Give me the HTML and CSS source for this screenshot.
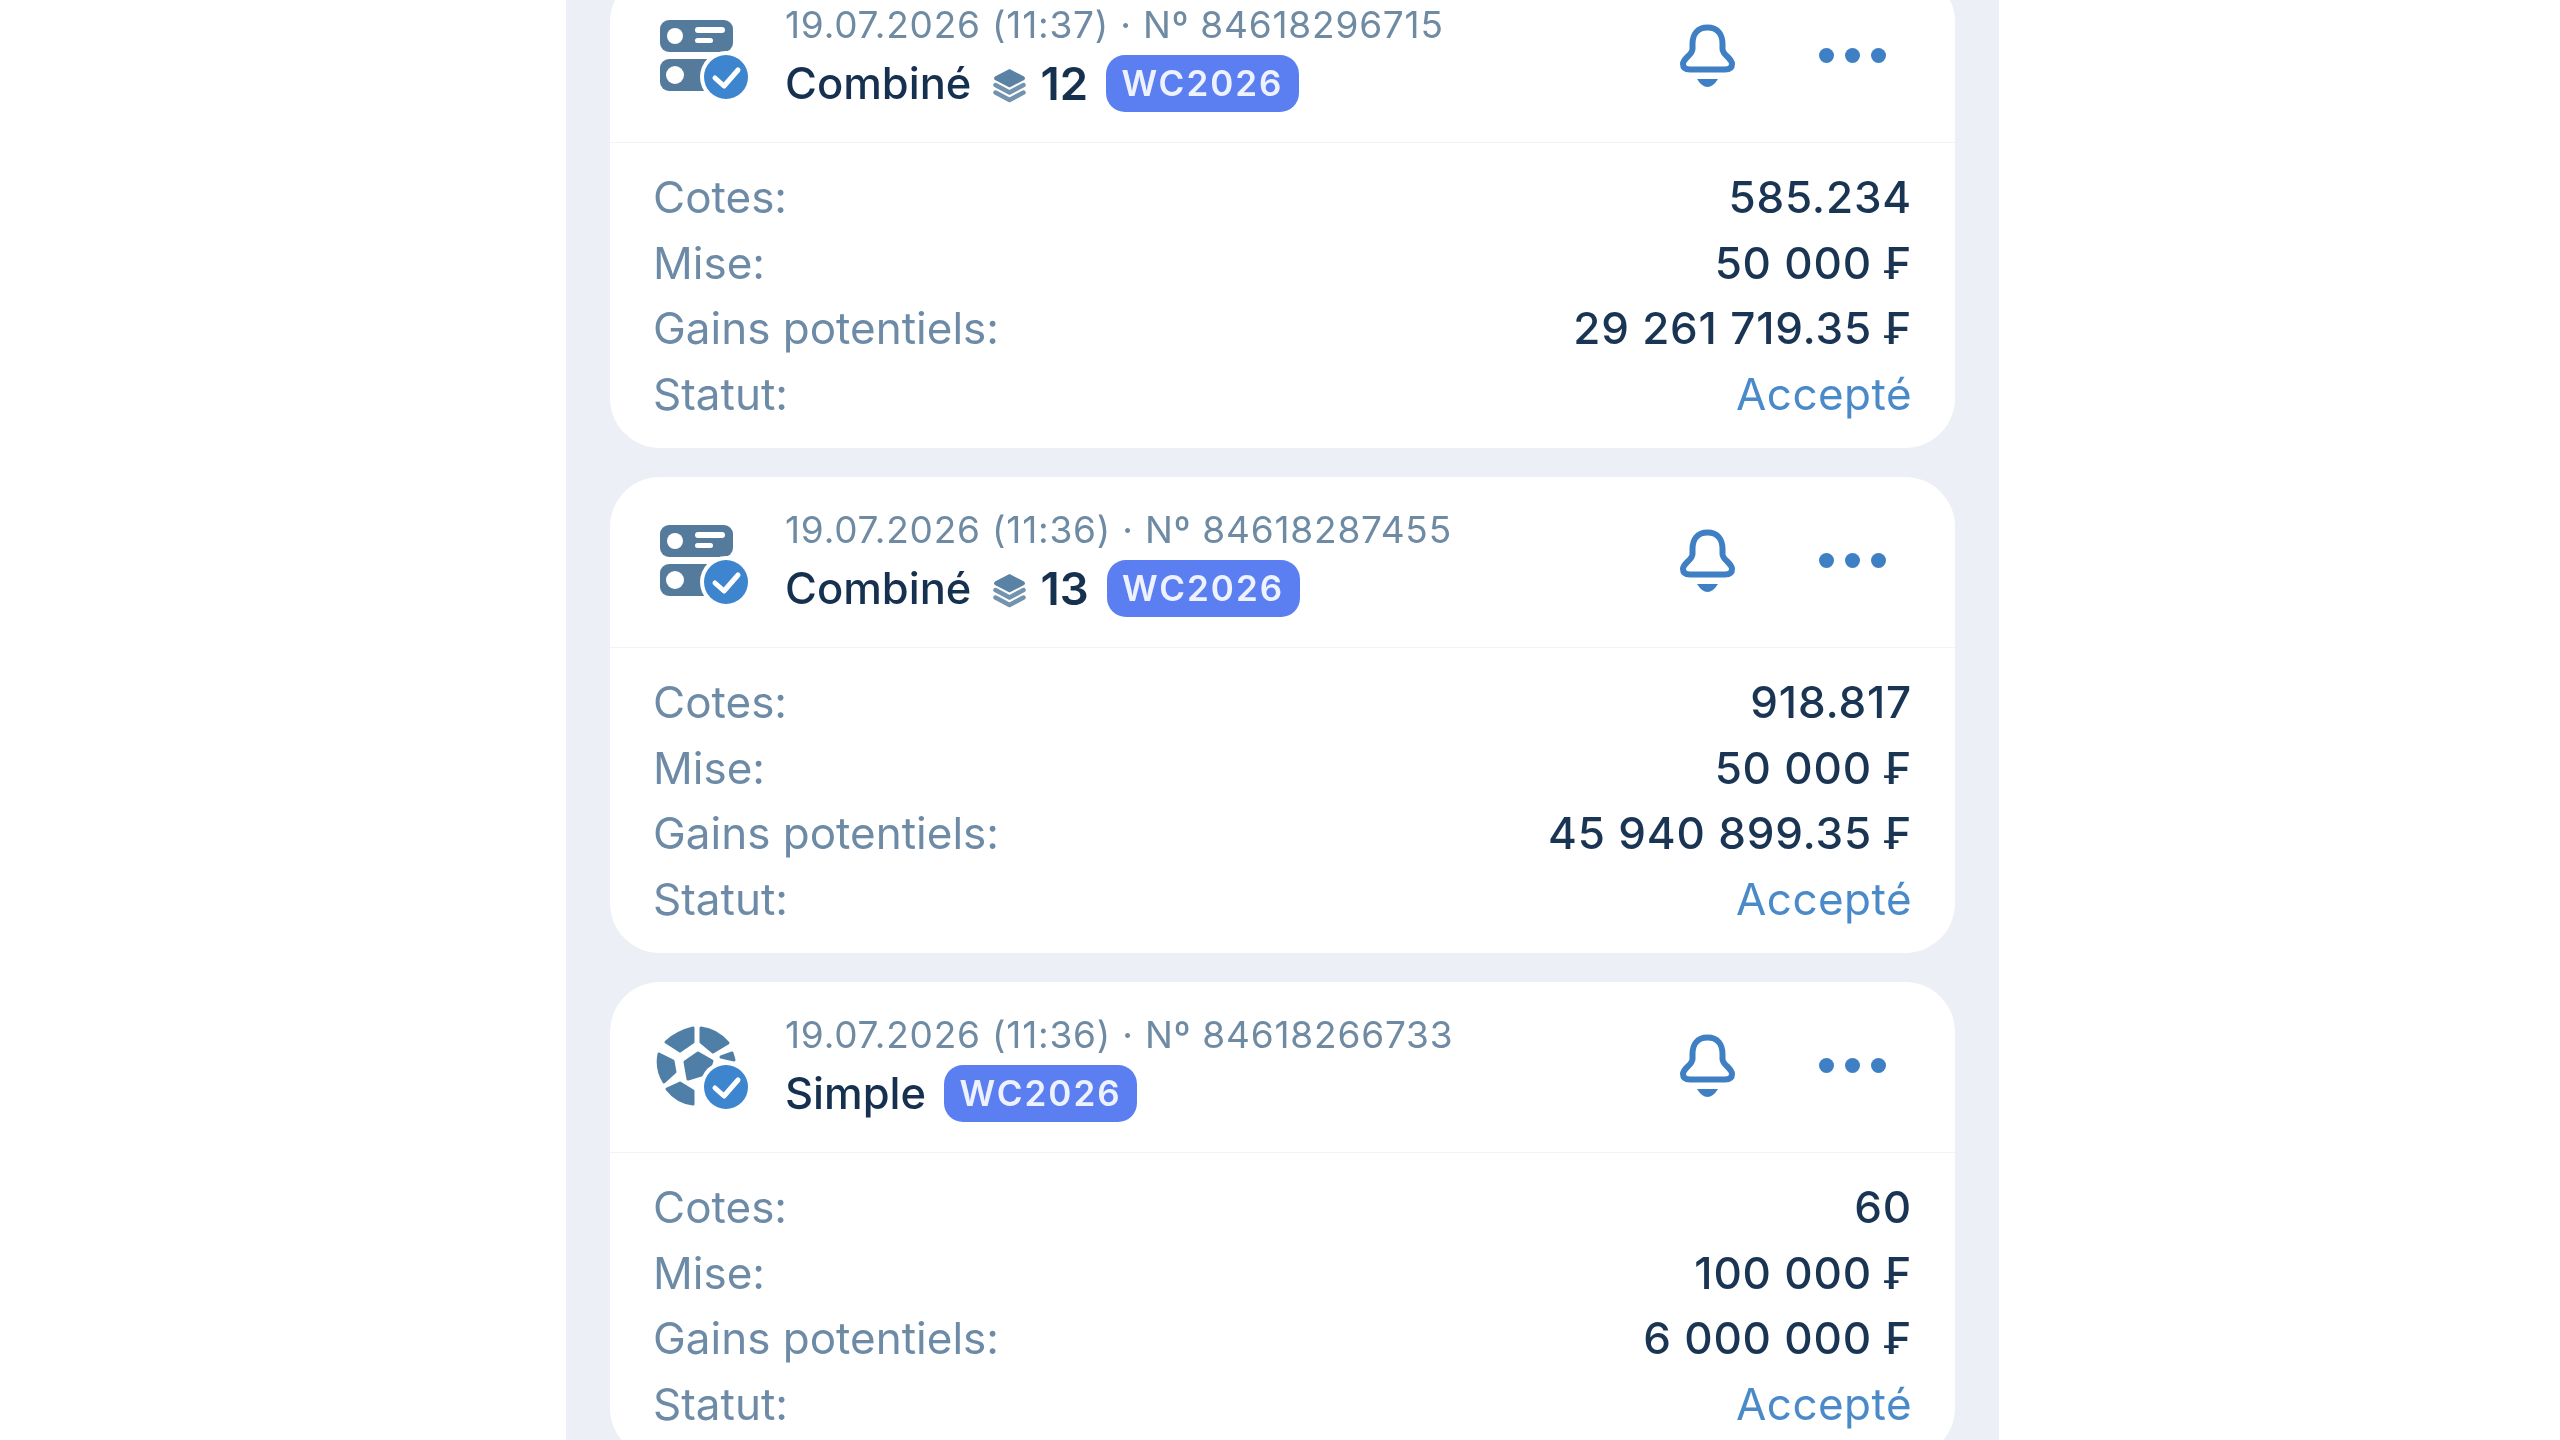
FILE: index.html
```html
<!DOCTYPE html>
<html lang="fr">
<head>
  <meta charset="UTF-8" />
  <meta name="viewport" content="width=device-width, initial-scale=1.0"/>
  <title>Historique des paris</title>
  <link rel="stylesheet" href="styles.css">
</head>
<body>

  <svg class="defs" width="0" height="0">
    <symbol id="ico-check" viewBox="0 0 100 90">
      <circle cx="71" cy="62" r="26" fill="#fff"/>
      <circle cx="71" cy="62" r="22" fill="#3d85cf"/>
      <path d="M60 63 L69 71 L83 55" fill="none" stroke="#fff" stroke-width="5" stroke-linecap="round" stroke-linejoin="round"/>
    </symbol>
    <symbol id="ico-combo" viewBox="0 0 100 90">
      <rect x="5" y="5" width="73" height="32" rx="9" fill="#557b9c"/>
      <circle cx="20" cy="21" r="8" fill="#fff"/>
      <rect x="40" y="12" width="30" height="6" rx="3" fill="#fff"/>
      <rect x="40" y="23" width="18" height="5" rx="2.5" fill="#fff"/>
      <rect x="5" y="44" width="73" height="32" rx="9" fill="#557b9c"/>
      <circle cx="20" cy="60" r="9" fill="#fff"/>
      <use href="#ico-check"/>
    </symbol>
    <symbol id="ico-ball" viewBox="0 0 100 90">
      <g fill="#4f7ea6" stroke="#4f7ea6" stroke-width="3" stroke-linejoin="round">
        <path d="M11 17 Q22 7 38 3 V17 L25 26 Z"/>
        <path d="M46 3 Q62 5 73 18 L58 27 L46 17 Z"/>
        <path d="M4 29 L18 36 L20 47 L9 57 Q1 44 4 29 Z"/>
        <path d="M30 37 L43 28 L57 36 L53 48 L33 54 Z"/>
        <path d="M66 32 L77 28 L79 35 Z"/>
        <path d="M12 64 L25 58 L38 66 V79 Q22 77 12 64 Z"/>
      </g>
      <use href="#ico-check"/>
    </symbol>
    <symbol id="ico-stack" viewBox="0 0 33 35">
      <path d="M16.500 1 L31 8.500 Q33 10.500 31 12 L16.500 19.500 L2 12 Q0 10.500 2 8.500 Z" fill="#5a82a5"/>
      <path d="M2.500 17 L16.500 24.500 L30.500 17" fill="none" stroke="#7393ae" stroke-width="4.500" stroke-linecap="round" stroke-linejoin="round"/>
      <path d="M2.500 24.500 L16.500 32 L30.500 24.500" fill="none" stroke="#7393ae" stroke-width="4.500" stroke-linecap="round" stroke-linejoin="round"/>
    </symbol>
    <symbol id="ico-bell" viewBox="0 0 60 66">
      <path d="M29.500 5.500 C19 5.500 14.500 13 14.500 22 V27 C14.500 33 5 36 5 42 C5 46 8 47.500 12 47.500 H47 C51 47.500 54 46 54 42 C54 36 44.500 33 44.500 27 V22 C44.500 13 40 5.500 29.500 5.500 Z" fill="none" stroke="#3f80c4" stroke-width="6" stroke-linejoin="round"/>
      <path d="M19 57 H40 Q35 65 29.500 65 Q24 65 19 57 Z" fill="#3f80c4"/>
    </symbol>
  </svg>

  <main class="panel">
    <div class="bet-list">

      <article class="bet-card">
        <header class="bet-head">
          <svg class="bet-icon"><use href="#ico-combo"/></svg>
          <div class="bet-info">
            <div class="bet-meta">19.07.2026 (11:37) · Nº 84618296715</div>
            <div class="bet-title">
              <span class="bet-type">Combiné</span>
              <svg class="stack-icon"><use href="#ico-stack"/></svg>
              <span class="bet-count">12</span>
              <span class="badge">WC2026</span>
            </div>
          </div>
          <div class="bet-actions">
            <svg class="bell-icon"><use href="#ico-bell"/></svg>
            <div class="dots"><span></span><span></span><span></span></div>
          </div>
        </header>
        <dl class="bet-rows">
          <div class="row"><dt>Cotes:</dt><dd>585.234</dd></div>
          <div class="row"><dt>Mise:</dt><dd>50 000 ₣</dd></div>
          <div class="row"><dt>Gains potentiels:</dt><dd>29 261 719.35 ₣</dd></div>
          <div class="row"><dt>Statut:</dt><dd class="accepted">Accepté</dd></div>
        </dl>
      </article>

      <article class="bet-card">
        <header class="bet-head">
          <svg class="bet-icon"><use href="#ico-combo"/></svg>
          <div class="bet-info">
            <div class="bet-meta">19.07.2026 (11:36) · Nº 84618287455</div>
            <div class="bet-title">
              <span class="bet-type">Combiné</span>
              <svg class="stack-icon"><use href="#ico-stack"/></svg>
              <span class="bet-count">13</span>
              <span class="badge">WC2026</span>
            </div>
          </div>
          <div class="bet-actions">
            <svg class="bell-icon"><use href="#ico-bell"/></svg>
            <div class="dots"><span></span><span></span><span></span></div>
          </div>
        </header>
        <dl class="bet-rows">
          <div class="row"><dt>Cotes:</dt><dd>918.817</dd></div>
          <div class="row"><dt>Mise:</dt><dd>50 000 ₣</dd></div>
          <div class="row"><dt>Gains potentiels:</dt><dd>45 940 899.35 ₣</dd></div>
          <div class="row"><dt>Statut:</dt><dd class="accepted">Accepté</dd></div>
        </dl>
      </article>

      <article class="bet-card">
        <header class="bet-head">
          <svg class="bet-icon"><use href="#ico-ball"/></svg>
          <div class="bet-info">
            <div class="bet-meta">19.07.2026 (11:36) · Nº 84618266733</div>
            <div class="bet-title">
              <span class="bet-type">Simple</span>
              <span class="badge">WC2026</span>
            </div>
          </div>
          <div class="bet-actions">
            <svg class="bell-icon"><use href="#ico-bell"/></svg>
            <div class="dots"><span></span><span></span><span></span></div>
          </div>
        </header>
        <dl class="bet-rows">
          <div class="row"><dt>Cotes:</dt><dd>60</dd></div>
          <div class="row"><dt>Mise:</dt><dd>100 000 ₣</dd></div>
          <div class="row"><dt>Gains potentiels:</dt><dd>6 000 000 ₣</dd></div>
          <div class="row"><dt>Statut:</dt><dd class="accepted">Accepté</dd></div>
        </dl>
      </article>

    </div>
  </main>

</body>
</html>
```

FILE: styles.css
```css
html, body {
  margin: 0;
  height: 1440px;
  overflow: hidden;
  background-color: #fff;
}
body {
  font-family: Inter, "Liberation Sans", sans-serif;
}
.defs {
  display: block;
  height: 0;
}
.panel {
  width: 1433px;
  height: 1440px;
  margin-left: 566px;
  overflow: hidden;
  background-color: #eceff5;
  filter: blur(0.6px);
}
.bet-list {
  display: flex;
  flex-direction: column;
  gap: 29px;
  margin: -28px 44px 0 44px;
}
.bet-card {
  height: 476px;
  flex: none;
  border-radius: 50px;
  background-color: #fff;
}
.bet-head {
  display: flex;
  align-items: flex-start;
  height: 146px;
  padding: 24px 69px 0 45px;
  border-bottom: 1px solid #f1f3f6;
}
.bet-icon {
  width: 100px;
  height: 90px;
  margin-top: 19px;
  margin-right: 30px;
  flex: none;
}
.bet-meta {
  height: 58px;
  line-height: 58px;
  font-size: 37px;
  letter-spacing: 0.8px;
  color: #6f8ba3;
}
.bet-title {
  display: flex;
  align-items: center;
  gap: 18px;
  height: 58px;
}
.bet-type {
  font-size: 43.5px;
  font-weight: 500;
  color: #16304f;
}
.stack-icon {
  width: 33px;
  height: 35px;
  margin: 4px 0 0 4px;
}
.bet-count {
  margin-left: -4px;
  font-size: 45.5px;
  font-weight: 600;
  color: #16304f;
}
.badge {
  width: 193px;
  height: 57px;
  line-height: 57px;
  text-align: center;
  border-radius: 19px;
  font-size: 35px;
  font-weight: 600;
  letter-spacing: 2px;
  color: #eef2fe;
  background-color: #5b7ff0;
}
.bet-actions {
  display: flex;
  align-items: center;
  gap: 81px;
  margin: 26px 0 0 auto;
}
.bell-icon {
  width: 60px;
  height: 66px;
}
.dots {
  display: flex;
  gap: 11px;
}
.dots span {
  width: 15px;
  height: 15px;
  border-radius: 50%;
  background-color: #3f80c4;
}
.bet-rows {
  margin: 0;
  padding: 22px 43px 0 43px;
}
.row {
  display: flex;
  justify-content: space-between;
  height: 65.6px;
  line-height: 65.6px;
  font-size: 44px;
}
.row dt {
  color: #6d8ba6;
}
.row dd {
  margin: 0;
  font-weight: 500;
  letter-spacing: 0.8px;
  color: #1a3553;
}
.row .accepted {
  font-weight: 400;
  letter-spacing: 0.45px;
  color: #4a8ac9;
}
```
